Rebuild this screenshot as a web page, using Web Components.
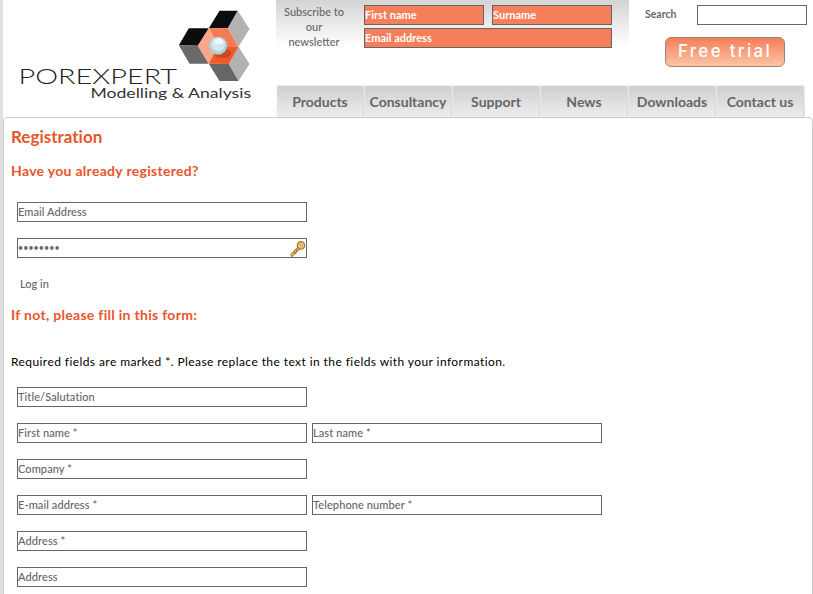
<!DOCTYPE html>
<html>
<head>
<meta charset="UTF-8">
<title>Porexpert - Registration</title>
<style>
  body { margin: 0; background: #e0e0e0; font-family: "Lato", "Liberation Sans", sans-serif; overflow: hidden; font-variant-ligatures: none; }
</style>
</head>
<body>
<px-page>
  <px-header slot="header"></px-header>
  <px-registration></px-registration>
</px-page>

<script>
(function () {
    // small helper, every element gets a shadow root from a string
    class Base extends HTMLElement {
        constructor() {
            super();
            let shadowRoot = this.attachShadow({ mode: "open" });
            shadowRoot.innerHTML = this.markup();
        }
    }

    class PxPage extends Base {
        markup() {
            return `<style>
                :host { display: block; margin-left: 3px; height: 594px; background: #fff; overflow: hidden; }
            </style>
            <slot name="header"></slot><slot></slot>`;
        }
    }

    class PxLogo extends Base {
        markup() {
            return `<style>
                :host { display: block; width: 273px; height: 117px; }
                svg { display: block; }
            </style>
            <svg width="273" height="117" viewBox="0 0 273 117">
                <g transform="translate(166.5 0) scale(.3333)" >
                    <polygon points="118,85 150,32 205,32 175,85" fill="#0c0c0c"/>
                    <polygon points="205,32 240,87 207,140 175,85" fill="#b2b2b2"/>
                    <polygon points="28,136 58,85 118,85 85,137" fill="#0c0c0c"/>
                    <polygon points="28,136 85,137 118,191 60,191" fill="#6a6a6a"/>
                    <polygon points="207,140 240,192 207,243 178,192" fill="#b2b2b2"/>
                    <polygon points="118,191 178,192 207,243 150,243" fill="#666"/>
                    <polygon points="118,85 175,85 207,140 146,137" fill="#f47c55"/>
                    <polygon points="118,85 146,137 118,191 85,137" fill="#f9a68c"/>
                    <polygon points="146,137 207,140 178,192 118,191" fill="#ee5a28"/>
                    <ellipse cx="160" cy="160" rx="26" ry="14" fill="#b8401c" opacity=".6"/>
                    <circle cx="146" cy="137" r="27" fill="#a9d3dc"/>
                    <circle cx="146" cy="133" r="21" fill="#d3e7ec"/>
                    <ellipse cx="148" cy="125" rx="13" ry="8" fill="#f4fafb"/>
                </g>
                <text x="15.5" y="84" textLength="158.5" lengthAdjust="spacingAndGlyphs" font-family="Lato" font-weight="300" font-size="21" fill="#222">POREXPERT</text>
                <text x="87.5" y="98" textLength="160.5" lengthAdjust="spacingAndGlyphs" font-family="Lato" font-size="14" fill="#333">Modelling &amp; Analysis</text>
            </svg>`;
        }
    }

    class PxSubscribeField extends Base {
        markup() {
            return `<style>
                :host { display: block; height: 20px; box-sizing: border-box; border: 1px solid #666; background: #f47f5a;
                        color: #fff; font: bold 11px/17px "Lato", sans-serif; }
            </style><slot></slot>`;
        }
    }

    class PxNewsletter extends Base {
        markup() {
            return `<style>
                :host { display: grid; grid-template-columns: 80px 120px 120px; grid-template-rows: 20px 20px; column-gap: 8px; row-gap: 3px;
                        width: 353px; height: 86px; box-sizing: border-box; padding-top: 5px;
                        background: linear-gradient(#d4d4d4, #fff 46px); }
                .label { grid-row: 1 / span 2; margin-top: -1px; padding-right: 4px; text-align: center; color: #666;
                         font: 500 11px/15px "Lato", sans-serif; }
                .wide { grid-column: 2 / span 2; }
            </style>
            <div class="label">Subscribe to<br>our<br>newsletter</div>
            <px-subscribe-field>First name</px-subscribe-field>
            <px-subscribe-field>Surname</px-subscribe-field>
            <px-subscribe-field class="wide">Email address</px-subscribe-field>`;
        }
    }

    class PxSearch extends Base {
        markup() {
            return `<style>
                :host { display: flex; flex-direction: column; width: 178px; padding: 5px 0 0 0; }
                .row { display: flex; align-items: center; height: 20px; padding-left: 16px; color: #666; font: bold 10.5px "Lato", sans-serif; }
                .row span { padding-bottom: 2px; }
                .box { width: 110px; height: 20px; box-sizing: border-box; border: 1px solid #666; margin-left: auto; background: #fff; }
                .trial { align-self: flex-start; margin: 12px 0 0 36px; width: 120px; height: 30px; box-sizing: border-box;
                         border: 1px solid #a08578; border-radius: 6px; background: linear-gradient(#f47f5a, #fdc4a5);
                         color: #fff; text-align: center; font: 500 17px/27px "Inter", sans-serif; letter-spacing: 2.3px; }
            </style>
            <div class="row"><span>Search</span><div class="box"></div></div>
            <div class="trial">Free trial</div>`;
        }
    }

    class PxNavTab extends Base {
        markup() {
            return `<style>
                :host { display: block; width: 86px; height: 31px; box-sizing: border-box; text-align: center;
                        background: linear-gradient(#cfcfcf, #ededed); box-shadow: 1px 0 2px #c4c4c4;
                        color: #666; font: bold 14px/32px "Lato", sans-serif; }
            </style><slot></slot>`;
        }
    }

    class PxHeader extends Base {
        markup() {
            return `<style>
                :host { display: grid; grid-template-columns: 273px 1fr; height: 117px; }
                .top { display: flex; height: 86px; }
                nav { display: flex; gap: 2px; padding-left: 1px; }
            </style>
            <px-logo></px-logo>
            <div>
                <div class="top"><px-newsletter></px-newsletter><px-search></px-search></div>
                <nav>
                    <px-nav-tab>Products</px-nav-tab>
                    <px-nav-tab>Consultancy</px-nav-tab>
                    <px-nav-tab>Support</px-nav-tab>
                    <px-nav-tab>News</px-nav-tab>
                    <px-nav-tab>Downloads</px-nav-tab>
                    <px-nav-tab>Contact us</px-nav-tab>
                </nav>
            </div>`;
        }
    }

    class PxField extends Base {
        markup() {
            let dots = this.hasAttribute("data-key");
            return `<style>
                :host { display: flex; align-items: center; justify-content: space-between; width: 290px; height: 20px; box-sizing: border-box;
                        border: 1px solid #666; background: #fff; color: #666; font: 500 11px/18px "Lato", sans-serif; letter-spacing: .1px; }
                span.dots { font-size: 8.8px; }
                svg { display: block; margin-right: 0; }
            </style>
            <span class="${dots ? "dots" : ""}"><slot></slot></span>
            ${dots ? `<svg width="16" height="17" viewBox="0 0 16 17">
                <path d="M2 15 L9 8" stroke="#a87a2c" stroke-width="3.2" stroke-linecap="round" fill="none"/>
                <path d="M2 15 L9 8" stroke="#ecc877" stroke-width="1.4" stroke-linecap="round" fill="none"/>
                <path d="M3.6 11.6 L5.8 13.8 M5.8 9.6 L7.4 11.2" stroke="#a87a2c" stroke-width="1.6" fill="none"/>
                <circle cx="11" cy="5.4" r="3.7" fill="#eac676" stroke="#a87a2c" stroke-width="1.2"/>
                <circle cx="11.6" cy="4.8" r="1.1" fill="#fff" stroke="#a87a2c" stroke-width=".6"/>
            </svg>` : ""}`;
        }
    }

    class PxRow extends Base {
        markup() {
            return `<style>
                :host { display: flex; gap: 5px; margin: 0 0 16px 6px; }
            </style><slot></slot>`;
        }
    }

    class PxRegistration extends Base {
        markup() {
            return `<style>
                :host { display: block; box-sizing: border-box; width: 810px; min-height: 520px; padding: 0 0 0 7px;
                        border: 1px solid #ccc; border-radius: 4px; background: #fff; }
                h1, h2 { margin: 0; color: #e8552b; font-family: "Lato", sans-serif; font-weight: bold; }
                h1 { font-size: 17px; line-height: 20px; padding-top: 9px; }
                h2 { font-size: 14px; line-height: 18px; letter-spacing: .3px; }
                .h-first { margin: 15px 0 22px; }
                .login { margin-left: 9px; padding-top: 3px; color: #666; font: 500 11px/14px "Lato", sans-serif; height: 14px; }
                .h-second { margin: 15px 0 30px; }
                p { margin: 0 0 17px; color: #000; font: 12px/16px "Lato", sans-serif; letter-spacing: .42px; }
            </style>
            <h1>Registration</h1>
            <h2 class="h-first">Have you already registered?</h2>
            <px-row><px-field>Email Address</px-field></px-row>
            <px-row><px-field data-key>••••••••</px-field></px-row>
            <div class="login">Log in</div>
            <h2 class="h-second">If not, please fill in this form:</h2>
            <p>Required fields are marked *. Please replace the text in the fields with your information.</p>
            <px-row><px-field>Title/Salutation</px-field></px-row>
            <px-row><px-field>First name *</px-field><px-field>Last name *</px-field></px-row>
            <px-row><px-field>Company *</px-field></px-row>
            <px-row><px-field>E-mail address *</px-field><px-field>Telephone number *</px-field></px-row>
            <px-row><px-field>Address *</px-field></px-row>
            <px-row><px-field>Address</px-field></px-row>`;
        }
    }

    customElements.define("px-subscribe-field", PxSubscribeField);
    customElements.define("px-logo", PxLogo);
    customElements.define("px-newsletter", PxNewsletter);
    customElements.define("px-search", PxSearch);
    customElements.define("px-nav-tab", PxNavTab);
    customElements.define("px-header", PxHeader);
    customElements.define("px-field", PxField);
    customElements.define("px-row", PxRow);
    customElements.define("px-registration", PxRegistration);
    customElements.define("px-page", PxPage);
})();
</script>
</body>
</html>
